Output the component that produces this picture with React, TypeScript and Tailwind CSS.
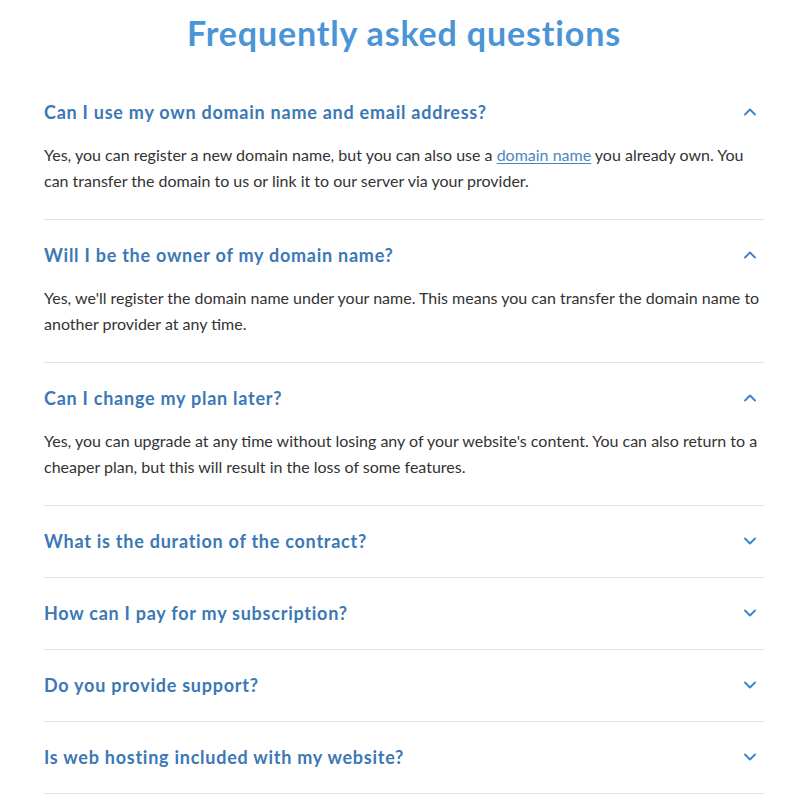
import React from "react";
import { ChevronDown, ChevronUp } from "lucide-react";

type FaqItem = {
  question: string;
  answer?: React.ReactNode;
};

const faqs: FaqItem[] = [
  {
    question: "Can I use my own domain name and email address?",
    answer: (
      <>
        Yes, you can register a new domain name, but you can also use a{" "}
        <a href="#" className="text-[#4a86c0] underline underline-offset-2">
          domain name
        </a>{" "}
        you already own. You can transfer the domain to us or link it to our server via your provider.
      </>
    ),
  },
  {
    question: "Will I be the owner of my domain name?",
    answer:
      "Yes, we'll register the domain name under your name. This means you can transfer the domain name to another provider at any time.",
  },
  {
    question: "Can I change my plan later?",
    answer:
      "Yes, you can upgrade at any time without losing any of your website's content. You can also return to a cheaper plan, but this will result in the loss of some features.",
  },
  { question: "What is the duration of the contract?" },
  { question: "How can I pay for my subscription?" },
  { question: "Do you provide support?" },
  { question: "Is web hosting included with my website?" },
];

const FaqRow: React.FC<{ item: FaqItem; first: boolean }> = ({ item, first }) => {
  const open = !!item.answer;
  return (
    <div className={first ? "" : "border-t border-[#e2e2e2]"}>
      <div className="flex items-center justify-between pt-[23px] pb-6">
        <span className="text-[18px] leading-6 font-bold tracking-[0.75px] text-[#3b78b5]">
          {item.question}
        </span>
        {open ? (
          <ChevronUp size={20} strokeWidth={2.2} className="mr-1 text-[#3b82c4]" />
        ) : (
          <ChevronDown size={20} strokeWidth={2.2} className="mr-1 text-[#3b82c4]" />
        )}
      </div>
      {open && (
        <p className="mt-[-6px] pb-[25px] text-[16px] leading-[26px] text-[#333]">{item.answer}</p>
      )}
    </div>
  );
};

export default function App() {
  return (
    <div className="min-h-screen bg-white font-['Lato','Liberation_Sans',sans-serif]">
      <div className="ml-[44px] w-[720px] pt-[13px]">
        <h1 className="mb-6 text-center text-[34px] leading-10 font-bold tracking-[0.85px] text-[#4b94d6]">
          Frequently asked questions
        </h1>
        <div className="border-b border-[#e2e2e2]">
          {faqs.map((item, index) => (
            <FaqRow key={index} item={item} first={index === 0} />
          ))}
        </div>
      </div>
    </div>
  );
}
